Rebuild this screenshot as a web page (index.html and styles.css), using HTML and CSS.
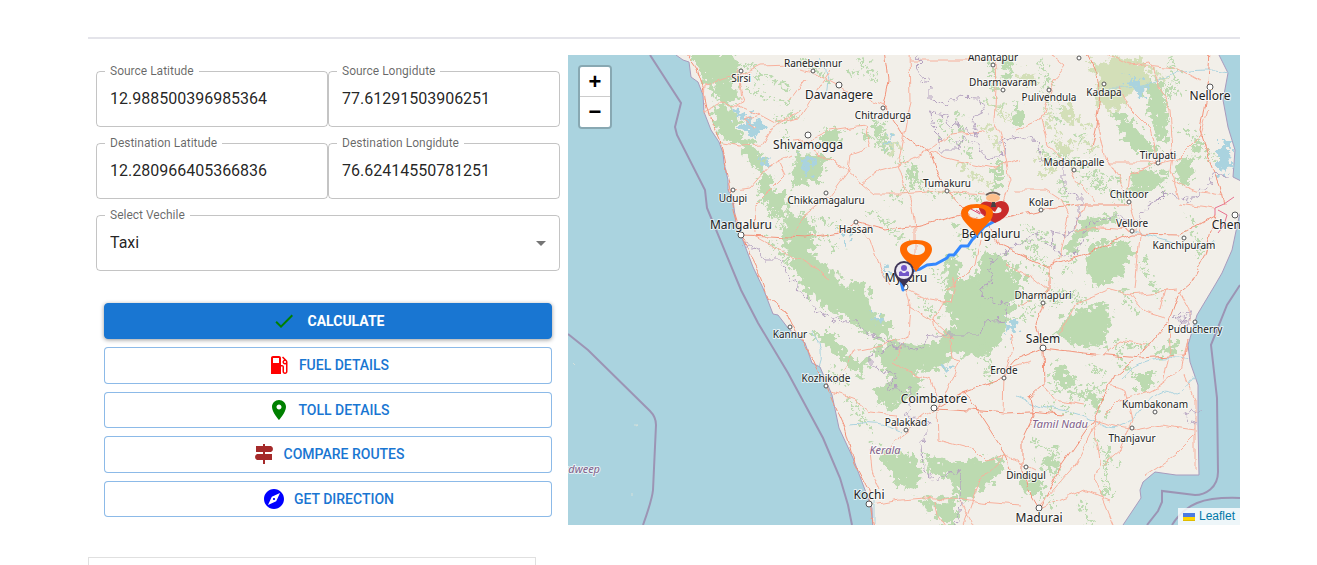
FILE: index.html
```html
<!DOCTYPE html>
<html lang="en">
<head>
    <meta charset="UTF-8">
    <meta name="viewport" content="width=device-width, initial-scale=1.0">
    <title>Route Calculator</title>
    <link rel="stylesheet" href="styles.css">
</head>
<body>
    <main class="page">
        <hr class="divider">
        <div class="planner">
            <form class="panel" onsubmit="return false">
                <div class="fields">
                    <div class="field">
                        <label for="srcLat">Source Latitude</label>
                        <input type="text" id="srcLat" value="12.988500396985364">
                    </div>
                    <div class="field">
                        <label for="srcLng">Source Longidute</label>
                        <input type="text" id="srcLng" value="77.61291503906251">
                    </div>
                    <div class="field">
                        <label for="dstLat">Destination Latitude</label>
                        <input type="text" id="dstLat" value="12.280966405366836">
                    </div>
                    <div class="field">
                        <label for="dstLng">Destination Longidute</label>
                        <input type="text" id="dstLng" value="76.62414550781251">
                    </div>
                    <div class="field wide">
                        <label for="vehicle">Select Vechile</label>
                        <select id="vehicle">
                            <option>Taxi</option>
                        </select>
                        <svg class="arrow" viewBox="0 0 24 24"><path d="M7 10l5 5 5-5z"/></svg>
                    </div>
                </div>
                <div class="actions">
                    <button type="submit" class="btn contained">
                        <svg class="icon check" viewBox="0 0 24 24"><path d="M9 16.17 4.83 12l-1.42 1.41L9 19 21 7l-1.41-1.41z"/></svg>
                        Calculate
                    </button>
                    <button type="button" class="btn">
                        <svg class="icon fuel" viewBox="0 0 24 24"><path d="M19.77 7.23l.01-.01-3.72-3.72L15 4.56l2.11 2.11c-.94.36-1.61 1.26-1.61 2.33 0 1.38 1.12 2.5 2.5 2.5.36 0 .69-.08 1-.21v7.21c0 .55-.45 1-1 1s-1-.45-1-1V14c0-1.1-.9-2-2-2h-1V5c0-1.1-.9-2-2-2H6c-1.1 0-2 .9-2 2v16h10v-7.5h1.5v5c0 1.38 1.12 2.5 2.5 2.5s2.5-1.12 2.5-2.5V9c0-.69-.28-1.32-.73-1.77zM12 10H6V5h6v5zm6 0c-.55 0-1-.45-1-1s.45-1 1-1 1 .45 1 1-.45 1-1 1z"/></svg>
                        Fuel Details
                    </button>
                    <button type="button" class="btn">
                        <svg class="icon toll" viewBox="0 0 24 24"><path d="M12 2C8.13 2 5 5.13 5 9c0 5.25 7 13 7 13s7-7.75 7-13c0-3.87-3.13-7-7-7zm0 9.5c-1.38 0-2.5-1.12-2.5-2.5s1.12-2.5 2.5-2.5 2.5 1.12 2.5 2.5-1.12 2.5-2.5 2.5z"/></svg>
                        Toll Details
                    </button>
                    <button type="button" class="btn">
                        <svg class="icon compare" viewBox="0 0 24 24"><path d="M11 2h2v2h6q2 1 2 3t-2 3h-6v2h7v6h-7v4h-2v-4H5q-2-1-2-3t2-3h6v-2H4V4h7z"/></svg>
                        Compare Routes
                    </button>
                    <button type="button" class="btn">
                        <svg class="icon direction" viewBox="0 0 24 24"><path d="M12 10.9c-.61 0-1.1.49-1.1 1.1s.49 1.1 1.1 1.1c.61 0 1.1-.49 1.1-1.1s-.49-1.1-1.1-1.1zM12 2C6.48 2 2 6.48 2 12s4.48 10 10 10 10-4.48 10-10S17.52 2 12 2zm2.19 12.19L6 18l3.81-8.19L18 6l-3.81 8.19z"/></svg>
                        Get Direction
                    </button>
                </div>
            </form>

            <div class="map">
                <svg class="tiles" viewBox="568 55 672 470" preserveAspectRatio="xMidYMid slice">
                    <defs>
                        <filter id="rough" x="-5%" y="-5%" width="110%" height="110%">
                            <feTurbulence type="fractalNoise" baseFrequency="0.16" numOctaves="3" seed="4"/>
                            <feDisplacementMap in="SourceGraphic" scale="22" xChannelSelector="R" yChannelSelector="G"/>
                        </filter>
                        <filter id="wiggle" x="-5%" y="-5%" width="110%" height="110%">
                            <feTurbulence type="fractalNoise" baseFrequency="0.07" numOctaves="2" seed="9"/>
                            <feDisplacementMap in="SourceGraphic" scale="8" xChannelSelector="R" yChannelSelector="G"/>
                        </filter>
                        <filter id="jagged" x="-5%" y="-5%" width="110%" height="110%">
                            <feTurbulence type="fractalNoise" baseFrequency="0.15" numOctaves="2" seed="6"/>
                            <feDisplacementMap in="SourceGraphic" scale="12" xChannelSelector="R" yChannelSelector="G"/>
                        </filter>
                        <clipPath id="coast"><use href="#land"/></clipPath>
                    </defs>
                    <rect class="sea" x="368" y="0" width="1072" height="600"/>
                    <path id="land" class="land" d="M674 45L676 55 683 60 689 62 691 77 698 82 703 95 704 112 711 130 719 142 723 153 724 163 728 180 728 190 733 200 736 223 742 238 753 267 763 288 773 314 778 315 788 328 805 343 812 363 820 367 832 395 839 428 853 458 862 482 872 508 873 535H1117L1123 525 1141 498 1140 490 1143 482 1155 472 1176 475 1199 475 1198 425 1198 385 1190 362 1188 345 1197 315 1215 285 1222 273 1232 250 1239 217 1245 200V183L1233 177 1235 150 1228 127 1223 100 1228 73 1219 55 1217 45z"/>

                    <!-- forests -->
                    <g clip-path="url(#coast)">
                        <g class="forest" filter="url(#rough)">
                            <path d="M689 52H730L742 62 735 76 725 83 712 87 703 78 698 66z"/>
                            <path d="M709 88L729 80 738 93 733 105 716 100z"/>
                            <path d="M711 107L733 105 737 120 743 140 730 143 718 133z"/>
                            <path d="M739 137L753 143 766 163 764 177 749 163 741 150z"/>
                            <path d="M758 177L771 175 774 193 786 193 788 213 776 217 766 203 758 187z"/>
                            <path d="M797 153L827 157 820 180 803 183 790 190zM820 132L843 130 837 143 820 147z"/>
                            <path d="M787 213L808 220 816 240 810 254 826 266 846 286 856 280 868 290 872 312 892 324 890 338 868 335 850 320 826 308 808 294 792 270 784 240z"/>
                            <path d="M810 332L832 332 844 350 855 360 870 362 862 378 850 370 836 354z"/>
                            <path d="M874 350L890 342 926 345 950 338 948 368 914 372 924 386 900 405 884 410 876 390 890 378 882 365z"/>
                            <path d="M954 280L975 276 992 288 1020 276 1020 292 1009 315 1001 342 980 358 950 352 940 335 957 320 944 308z"/>
                            <path d="M985 250L1006 256 1012 275 1004 300 982 296 976 280z"/>
                            <path d="M1112 110L1128 117 1145 137 1162 153 1135 153 1122 133zM1138 73L1162 83 1168 103 1167 143 1155 137 1148 100z"/>
                            <path d="M1130 168L1172 175 1158 187 1132 195zM1175 163L1190 155 1193 180 1178 185zM1190 148L1206 140 1206 150 1196 158z"/>
                            <path d="M1087 217L1120 215 1100 228 1082 238 1074 254 1062 252 1074 232z"/>
                            <path d="M1092 243L1125 240 1133 250 1120 278 1092 287 1085 267z"/>
                            <path d="M1062 318L1105 302 1112 325 1098 350 1075 345 1058 335z"/>
                            <path d="M1050 366L1062 364 1070 376 1080 380 1068 388 1058 386zM1082 396L1100 392 1103 402 1090 406z"/>
                            <path d="M1154 350L1179 341 1179 350 1156 357zM1138 373L1155 373 1150 390 1138 391z"/>
                            <path d="M878 450L913 454 923 478 913 492 894 480zM923 457L957 462 1000 457 1003 471 977 494 960 500 950 478 933 474z"/>
                            <path d="M920 500L955 498 955 530 938 520zM1020 476L1045 482 1042 492 1024 494zM1042 458L1056 456 1060 468 1046 470z"/>
                            <path d="M870 120L874 118 893 148 888 152 876 135zM910 165L916 166 918 185 912 184zM996 162L1000 162 1000 190 994 190z"/>
                            <path d="M945 262L952 254 960 262 958 285 946 290zM1005 55L1014 55 1010 80 1002 85zM1012 105L1024 108 1024 124 1014 128z"/>
                            <path d="M1012 262L1024 272 1024 290 1012 290zM1165 80L1174 95 1170 98z"/>
                            <path class="loose" d="M745 65L790 90M748 90L790 105M775 120L800 115M785 130L790 150M860 60L880 85M850 75L870 65M1050 140L1075 165M1060 152L1110 190M1080 135L1095 155M1045 85L1060 130M1040 150L1060 162M1170 60L1180 95M1185 130L1215 160M1080 178L1125 200M1085 172L1120 180M1060 180L1070 210M1025 225L1055 245M1035 245L1050 280M1028 240L1035 270M860 130L905 165M880 120L890 150M905 175L935 195M940 190L985 200M890 200L915 185M870 210L905 240M800 215L850 230M820 235L840 250M930 270L945 285M920 300L940 320M955 225L975 255M1018 305L1060 300M1015 320L1035 310M1050 290L1085 300M1120 290L1140 315M1105 345L1150 345M1060 380L1110 420M1050 372L1056 392M1070 395L1105 385M1070 410L1040 405M1090 365L1105 375M1030 440L1060 455M1040 460L1060 480M1040 490L1055 505M1105 460L1108 500M1080 500L1090 525M1095 440L1120 470M870 440L885 450M1040 60L1050 85M1150 165L1165 195M1115 355L1140 380M825 470L840 480M850 400L870 430M1075 260L1060 275M830 370L845 385M980 305L990 380M990 60L995 90M985 100L1005 110M955 110L970 160M940 125L955 145M800 60L830 80M760 200L790 235M770 240L790 265M1190 215L1200 260M1140 260L1160 300"/>
                        </g>
                        <g class="scrub" filter="url(#rough)">
                            <path d="M1110 55L1145 62 1152 83 1132 93 1118 112 1098 105 1097 88zM1085 60L1112 67 1116 80 1102 80z"/>
                            <path d="M1020 70L1035 78 1038 84 1022 84zM1060 100L1074 110 1068 124 1060 113zM1052 140L1073 145 1070 156 1058 152zM888 138L899 145 897 157 889 152zM1034 155L1046 158 1044 165z"/>
                            <path class="patches" d="M1045 110L1060 140M1070 120L1090 125M1075 140L1095 148M1150 70L1165 80M990 100L1008 118M985 125L1000 150M960 165L990 185M1040 175L1060 165"/>
                        </g>
                        <g class="lake" filter="url(#rough)">
                            <path d="M733 108L748 116 764 124 756 139 745 130z"/>
                            <path d="M758 158L770 162 764 168zM801 156L815 162 806 176zM882 145L893 136 890 148z"/>
                            <path d="M1125 75L1150 88 1140 95zM1218 143L1229 140 1231 165 1224 178 1218 170z"/>
                            <path d="M871 313L882 318 876 324zM1001 320L1020 326 1010 333zM885 268L895 274 889 280zM942 362L952 366 945 372zM841 232L850 236 846 242z"/>
                        </g>
                        <g class="river" filter="url(#wiggle)">
                            <path d="M1016 398Q1040 408 1060 410T1100 424 1140 410 1170 392 1195 375"/>
                            <path d="M1108 88Q1140 90 1160 80T1205 70 1228 73M1130 230Q1160 240 1185 246T1215 240"/>
                            <path d="M820 60Q835 80 822 100M812 330Q825 350 818 365M850 425Q880 420 900 432M875 500V525M1120 380Q1150 350 1190 360"/>
                        </g>
                    </g>

                    <!-- roads -->
                    <g class="roads" filter="url(#wiggle)">
                        <path class="major" d="M684 50L697 68 704 90 706 105 712 122 720 140 724 160 729 185 735 215 741 235 750 256 762 280 768 298 785 310 792 325 806 345 815 365 827 385 833 400 845 428 855 465 868 490 874 530"/>
                        <path class="major" d="M884 50L888 80 883 105 903 135 930 155 945 190 962 208 975 222M1085 50L1097 75 1100 95 1096 125 1090 150M1210 50L1208 85 1200 130 1210 160 1220 185 1225 205"/>
                        <path class="major" d="M741 235L770 236 805 238 840 232 856 222 885 230 920 226 960 215 990 222 1040 210 1080 205 1128 205"/>
                        <path class="major" d="M990 225L1000 245 1048 267 1048 290 1036 325 1043 348 1044 384 1030 397 1034 415 1022 440 1022 470 1030 495 1039 510M1043 348L1085 353 1140 358 1185 355 1188 340"/>
                        <path class="major" d="M1048 267L1080 256 1130 234 1180 235 1215 215M1215 215L1205 255 1190 285 1178 295 1169 320 1145 350 1115 375 1093 420 1062 465 1040 510"/>
                        <path class="major" d="M935 408L970 410 1005 413 1030 412 1062 415M935 408L963 392 997 380 1015 360 1043 348M965 392L990 430 1006 455 1010 470"/>
                        <path d="M735 70L746 100 737 105 720 104 704 112M704 100L705 85 740 76 760 66 790 65M737 105L760 115 775 123 800 118 830 70"/>
                        <path d="M740 80L742 100M755 128L743 120 760 115M723 143L740 146 762 145 770 130 800 110M734 190L750 188 770 165 790 155"/>
                        <path d="M756 233L755 205 765 195 785 175 778 160M753 235L780 250 810 265 830 280"/>
                        <path d="M800 70L813 73 845 90 883 105M790 100L805 80M793 142L810 140 830 130 865 125 870 148 850 155 848 170 830 195 805 215 790 240"/>
                        <path d="M862 184L880 170 896 166 930 150 950 135 985 132M808 150L840 165 862 184 875 195 900 195 940 192 985 195"/>
                        <path d="M909 50L910 100 898 165 912 205 915 230 915 260 905 285 910 305 908 335 895 360M856 222L870 240 880 270 890 285"/>
                        <path d="M910 60L960 60 995 60 996 90 994 120 1003 145 1010 180 1000 210M929 153L955 160 995 168 1020 160"/>
                        <path d="M1046 50L1066 66 1055 80 1048 100 1042 118 1048 145 1070 165 1076 180 1095 202M1015 130L1042 118M1015 190L1045 190 1060 200 1068 215 1065 230 1058 260 1050 270"/>
                        <path d="M1097 120L1105 155 1120 180 1128 195 1133 215 1140 235 1135 290M1158 164L1130 175 1128 190M1108 162L1150 162 1158 164 1180 158 1200 138 1208 110M1158 164L1150 130 1130 110 1120 88"/>
                        <path d="M1100 50L1130 65 1150 62 1158 85 1170 110 1173 150 1170 170 1178 200M1145 65L1175 68 1200 82M1170 180L1195 190 1225 195M1178 205L1215 210M1085 205L1075 230 1100 228 1135 230"/>
                        <path d="M906 288L930 300 950 303 955 280M908 305L935 322 955 340M950 340L952 358 960 360 945 395 937 408M955 340L935 330 933 318 945 300"/>
                        <path d="M892 362L910 372 930 380 937 400M908 335L880 345 855 350 848 365 838 380M832 392L855 400 870 412 895 415 897 430M935 408L900 435 885 455 870 450 872 470 880 490"/>
                        <path d="M937 410L938 440 975 450 985 460 1006 455M868 506L900 500 925 498 945 500 960 498 980 502 1020 505M935 502L938 515 948 530M960 500L975 530M1006 455L980 480 962 530"/>
                        <path d="M1006 455L1035 470M1018 308L1048 290M1060 335L1075 305 1110 290 1130 295 1178 290M1103 355L1120 340 1145 345M1131 295L1145 312 1165 318"/>
                        <path d="M1169 320L1170 350 1163 385 1150 392 1120 400 1105 415M1163 385L1180 370 1188 340M1185 375L1195 400 1195 470M1093 420L1110 425 1135 430 1160 425 1195 430M1093 420L1100 460 1095 480 1115 530"/>
                        <path d="M1110 385L1125 390 1132 420 1120 450 1102 465M1195 435L1175 455 1145 475M1040 505L1075 465 1098 420M1043 385L1055 400 1085 405M1038 510L1060 500 1085 490 1110 500"/>
                        <path d="M1178 292L1165 290 1160 310M1180 292L1190 310 1190 320M1005 265L1030 275 1048 290M980 240L975 265 955 285 945 290M1010 335L1013 350 1004 375 1003 412M1003 370L1030 362"/>
                    </g>
                    <path class="urban" d="M1215 215V208L1224 204 1234 197M1218 210L1227 215 1224 225 1218 233M985 205L992 203 1003 208 1006 215"/>

                    <!-- borders -->
                    <g class="border" filter="url(#jagged)">
                        <path d="M919 50L918 75 930 85 930 100 948 105 955 97 980 98 984 112 972 118 978 138 965 128 950 125 945 115 930 112 933 128 940 135 938 150 958 150 962 138 978 145 984 158 1005 155 1003 140 1020 135 1036 140 1042 160 1064 165 1064 190 1080 197 1080 215 1070 235 1052 232 1053 248 1068 258 1080 248 1087 225 1115 216 1140 225 1140 212 1158 200 1165 193 1190 200 1210 185 1212 174 1228 176"/>
                        <path d="M742 243L760 250 765 260 780 260 788 275 800 290 815 308 835 320 858 322 862 330 885 340 895 345 920 350 930 335 955 335 980 335 985 322 1005 320 1008 305 985 298 980 290 992 280 990 262 1005 253 1025 240 1035 235 1050 245"/>
                        <path d="M895 345L870 355 870 365 895 375 888 388 910 390 910 405 905 415 930 425 922 445 923 470 935 480 960 470 962 485 957 530"/>
                        <path d="M1176 314L1190 312 1190 325 1180 328zM1177 318L1190 322 1178 322 1188 316M1200 410L1186 412 1190 420 1198 424"/>
                    </g>
                    <g class="maritime">
                        <path d="M650 55L681 103 675 127 677 135 705 190 707 208 741 290 758 323 788 373 823 438 840 478 848 505 852 525"/>
                        <path d="M568 334L588 350 650 411Q656 417 656 425L653 490Q652 500 643 525"/>
                        <path d="M1240 285L1227 305 1211 345 1217 398 1218 472C1218 488 1205 495 1195 495L1162 491V502L1158 511 1147 525M1172 525Q1182 509 1197 503T1240 498"/>
                    </g>
                    <path class="islets" d="M573 363l2 2M634 425h4l-2 1M632 493v3"/>

                    <!-- towns -->
                    <g class="towns">
                        <circle cx="741" cy="71" r="2"/><circle cx="813" cy="71" r="2"/><circle cx="839" cy="85" r="3"/><circle cx="883" cy="108" r="2"/>
                        <circle cx="808" cy="135" r="3"/><circle cx="733" cy="190" r="2"/><circle cx="741" cy="235" r="3"/><circle cx="826" cy="193" r="2"/>
                        <circle cx="856" cy="222" r="2"/><circle cx="947" cy="191" r="2"/><circle cx="993" cy="65" r="2"/><circle cx="1003" cy="90" r="2"/>
                        <circle cx="1049" cy="90" r="2"/><circle cx="1079" cy="58" r="2"/><circle cx="1104" cy="84" r="2"/><circle cx="1210" cy="87" r="3"/>
                        <circle cx="1074" cy="170" r="2"/><circle cx="1158" cy="163" r="2"/><circle cx="1041" cy="210" r="2"/><circle cx="1129" cy="202" r="2"/>
                        <circle cx="1132" cy="231" r="2"/><circle cx="1184" cy="238" r="2"/><circle cx="1235" cy="215" r="3"/><circle cx="905" cy="287" r="3"/>
                        <circle cx="790" cy="327" r="2"/><circle cx="826" cy="386" r="2"/><circle cx="934" cy="408" r="3"/><circle cx="906" cy="430" r="2"/>
                        <circle cx="869" cy="504" r="3"/><circle cx="1004" cy="378" r="2"/><circle cx="1043" cy="303" r="2"/><circle cx="1043" cy="348" r="3"/>
                        <circle cx="1195" cy="322" r="2"/><circle cx="1155" cy="412" r="2"/><circle cx="1132" cy="428" r="2"/><circle cx="1026" cy="467" r="2"/>
                        <circle cx="1039" cy="508" r="3"/>
                    </g>
                    <g class="labels">
                        <text x="741" y="82">Sirsi</text>
                        <text x="813" y="67">Ranebennur</text>
                        <text x="883" y="119">Chitradurga</text>
                        <text x="733" y="202">Udupi</text>
                        <text x="826" y="204">Chikkamagaluru</text>
                        <text x="856" y="233">Hassan</text>
                        <text x="947" y="187">Tumakuru</text>
                        <text x="993" y="61">Anantapur</text>
                        <text x="1003" y="86">Dharmavaram</text>
                        <text x="1049" y="101">Pulivendula</text>
                        <text x="1104" y="96">Kadapa</text>
                        <text x="1074" y="166">Madanapalle</text>
                        <text x="1158" y="159">Tirupati</text>
                        <text x="1041" y="206">Kolar</text>
                        <text x="1129" y="198">Chittoor</text>
                        <text x="1132" y="227">Vellore</text>
                        <text x="1184" y="249">Kanchipuram</text>
                        <text x="790" y="338">Kannur</text>
                        <text x="826" y="382">Kozhikode</text>
                        <text x="906" y="426">Palakkad</text>
                        <text x="1004" y="374">Erode</text>
                        <text x="1043" y="299">Dharmapuri</text>
                        <text x="1195" y="333">Puducherry</text>
                        <text x="1155" y="408">Kumbakonam</text>
                        <text x="1132" y="442">Thanjavur</text>
                        <text x="1026" y="479">Dindigul</text>
                        <g class="city">
                            <text x="839" y="99">Davanagere</text>
                            <text x="808" y="149">Shivamogga</text>
                            <text x="741" y="229">Mangaluru</text>
                            <text x="991" y="238">Bengaluru</text>
                            <text x="906" y="282">Mysuru</text>
                            <text x="1210" y="100">Nellore</text>
                            <text x="1235" y="229">Chennai</text>
                            <text x="934" y="403">Coimbatore</text>
                            <text x="869" y="499">Kochi</text>
                            <text x="1043" y="343">Salem</text>
                            <text x="1039" y="522">Madurai</text>
                        </g>
                        <g class="state">
                            <text x="885" y="454">Kerala</text>
                            <text x="1060" y="428">Tamil Nadu</text>
                            <text x="567" y="473">Lakshadweep</text>
                        </g>
                    </g>

                    <!-- route and markers -->
                    <path class="route" d="M903 290L901 282 907 272 920 269 927 265 936 264 947 258 949 255 954 255 961 246 968 246 972 240 977 235 984 227 995 221"/>
                    <g>
                        <path fill="#c92a2a" fill-rule="evenodd" d="M995 223C987 219 978 212 979 207C981 201 988 200 994 204C1001 198 1009 202 1009 209C1009 215 1002 220 995 223zM988 208Q993 216 1001 212Q1003 208 998 207L995 212z"/>
                        <ellipse cx="993" cy="198" rx="7" ry="4" fill="#fdbf8c"/>
                        <path d="M986 195Q993 190 1000 195" fill="none" stroke="#6b5d56" stroke-width="2"/>
                        <path d="M992 202h3l1 5h-5z" fill="#444"/>
                    </g>
                    <path class="pin" d="M977 236C972 227 961 222 961 213C961 207 968 204 977 204S993 207 993 213C993 222 982 227 977 236zM977 208C972 208 968 210 968 213S972 219 977 219 986 217 986 213 982 208 977 208z"/>
                    <path d="M971 209l9 5M976 210l8 5" stroke="#d9456f" fill="none"/>
                    <path class="pin" d="M916 272C911 263 900 258 900 249C900 243 907 240 916 240S932 243 932 249C932 258 921 263 916 272zM916 244C911 244 907 246 907 249S911 255 916 255 925 253 925 249 921 244 916 244z"/>
                    <g>
                        <path fill="#3d3455" d="M904 288C902 281 894 279 894 271A10 10 0 0 1 914 271C914 279 906 281 904 288z"/>
                        <circle cx="904" cy="271" r="8" fill="#eeeaf4"/>
                        <circle cx="904" cy="268" r="3" fill="#7357c8"/>
                        <path fill="#7357c8" d="M899 272l2-1 2 2h2l2-2 2 1v4h-10z"/>
                    </g>
                </svg>
                <div class="zoom">
                    <button type="button" aria-label="Zoom in">+</button>
                    <button type="button" aria-label="Zoom out">&minus;</button>
                </div>
                <a class="credit" href="#">
                    <svg viewBox="0 0 12 8"><path fill="#4c7be1" d="M0 0h12v4H0z"/><path fill="#ffd500" d="M0 4h12v3H0z"/><path fill="#e0bc00" d="M0 7h12v1H0z"/></svg>
                    Leaflet
                </a>
            </div>
        </div>
        <section class="result"></section>
    </main>
</body>
</html>
```
FILE: styles.css
```css
* {
    box-sizing: border-box;
}
body {
    margin: 0;
    background: #fff;
    color: rgba(0, 0, 0, 0.87);
    font-family: Roboto, "Liberation Sans", sans-serif;
}
.page {
    padding: 37px 77px 0 88px;
}
.divider {
    height: 2px;
    margin: 0 0 16px;
    border: none;
    background: #e4e4ea;
}
.planner {
    display: grid;
    grid-template-columns: 5fr 7fr;
    align-items: start;
}
.panel {
    padding: 16px 8px 0;
}
.fields {
    display: grid;
    grid-template-columns: 1fr 1fr;
    row-gap: 16px;
}
.field {
    position: relative;
}
.wide {
    grid-column: span 2;
}
.field label {
    position: absolute;
    top: -8px;
    left: 9px;
    padding: 0 5px;
    background: #fff;
    color: rgba(0, 0, 0, 0.6);
    font-size: 12px;
    line-height: 16px;
}
.field input,
.field select {
    display: block;
    width: 100%;
    height: 56px;
    padding: 0 13px 2px;
    border: 1px solid rgba(0, 0, 0, 0.23);
    border-radius: 4px;
    background: none;
    color: inherit;
    font: inherit;
    font-size: 16px;
    appearance: none;
}
.arrow {
    position: absolute;
    top: 16px;
    right: 7px;
    width: 24px;
    height: 24px;
    fill: rgba(0, 0, 0, 0.54);
    pointer-events: none;
}
.actions {
    display: flex;
    flex-direction: column;
    gap: 8px;
    padding: 32px 8px 8px;
}
.btn {
    display: flex;
    align-items: center;
    justify-content: center;
    gap: 8px;
    padding: 5px 15px;
    border: 1px solid rgba(25, 118, 210, 0.5);
    border-radius: 4px;
    background: #fff;
    color: #1976d2;
    font-family: inherit;
    font-size: 14px;
    font-weight: 500;
    line-height: 1.75;
    text-transform: uppercase;
    cursor: pointer;
}
.contained {
    gap: 12px;
    border-color: #1976d2;
    background: #1976d2;
    color: #fff;
    font-weight: 700;
    line-height: 24px;
    box-shadow: 0 1px 4px rgba(0, 0, 0, 0.4);
}
.icon {
    width: 24px;
    height: 24px;
}
.check {
    fill: green;
}
.fuel {
    fill: red;
}
.toll {
    fill: green;
}
.compare {
    fill: brown;
}
.direction {
    fill: blue;
}
.map {
    position: relative;
    height: 470px;
    overflow: hidden;
    background: #aad3df;
}
.tiles {
    display: block;
    width: 100%;
    height: 100%;
}
.sea {
    fill: #aad3df;
}
.land {
    fill: #f2efe9;
    stroke: #a99bbd;
}
.forest {
    fill: #bcdab0;
}
.loose {
    fill: none;
    stroke: #bcdab0;
    stroke-width: 5;
    stroke-dasharray: 4 4;
}
.scrub {
    fill: #d3dfb8;
}
.patches {
    fill: none;
    stroke: #d3dfb8;
    stroke-width: 6;
    stroke-dasharray: 5 3;
}
.lake {
    fill: #aad3df;
}
.river {
    fill: none;
    stroke: #aad3df;
}
.roads {
    fill: none;
    stroke: #f8b09c;
    stroke-width: 1;
}
.major {
    stroke: #f3937a;
}
.urban {
    fill: none;
    stroke: #e8718f;
}
.border {
    fill: none;
    stroke: #b3a0bf;
}
.maritime {
    fill: none;
    stroke: #9c94b4;
    stroke-width: 2;
}
.islets {
    fill: none;
    stroke: #d5e0da;
}
.towns {
    fill: #fff;
    stroke: #555;
    stroke-width: 1;
}
.labels {
    fill: #222;
    stroke: rgba(255, 255, 255, 0.7);
    stroke-width: 2;
    stroke-linejoin: round;
    paint-order: stroke;
    font-family: "Noto Sans", sans-serif;
    font-size: 10px;
    text-anchor: middle;
}
.city {
    font-size: 12px;
}
.state {
    fill: #80608a;
    font-size: 11px;
    font-style: italic;
}
.route {
    fill: none;
    stroke: #3388ff;
    stroke-width: 3;
    stroke-linecap: round;
    stroke-linejoin: round;
}
.pin {
    fill: #ff6a00;
    fill-rule: evenodd;
}
.zoom {
    position: absolute;
    top: 10px;
    left: 10px;
    border: 2px solid rgba(0, 0, 0, 0.2);
    border-radius: 4px;
    background-clip: padding-box;
}
.zoom button {
    display: block;
    width: 30px;
    height: 30px;
    padding: 0;
    border: none;
    border-radius: 0 0 2px 2px;
    background: #fff;
    color: #000;
    font: bold 22px/30px "Liberation Sans", sans-serif;
    cursor: pointer;
}
.zoom button:first-child {
    border-bottom: 1px solid #ccc;
    border-radius: 2px 2px 0 0;
}
.credit {
    position: absolute;
    right: 0;
    bottom: 0;
    display: flex;
    align-items: center;
    gap: 4px;
    padding: 0 5px;
    background: rgba(255, 255, 255, 0.8);
    color: #0078a8;
    font: 12px/17px "Liberation Sans", sans-serif;
    text-decoration: none;
}
.credit svg {
    width: 12px;
    height: 8px;
}
.result {
    width: calc(100% * 7 / 18);
    min-height: 8px;
    margin-top: 32px;
    border: 1px solid #e0e0e0;
    border-bottom: none;
}
@media (max-width: 800px) {
    .page {
        padding: 24px 16px 0;
    }
    .planner {
        grid-template-columns: 1fr;
    }
}
```
